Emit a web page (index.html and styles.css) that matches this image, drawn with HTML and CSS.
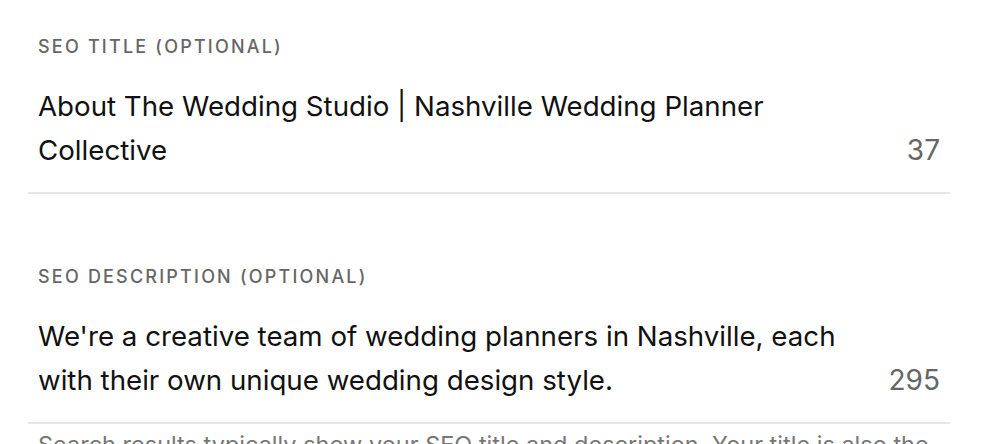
FILE: index.html
```html
<!DOCTYPE html>
<html>
<head>
<meta charset="utf-8">
<link rel="stylesheet" href="styles.css">
</head>
<body>
<div class="panel">
  <div class="field">
    <div class="label">SEO Title (Optional)</div>
    <div class="input-row">
      <div class="value">About The Wedding Studio | Nashville Wedding Planner Collective</div>
      <div class="count">37</div>
    </div>
  </div>
  <div class="field">
    <div class="label">SEO Description (Optional)</div>
    <div class="input-row">
      <div class="value">We're a creative team of wedding planners in Nashville, each with their own unique wedding design style.</div>
      <div class="count">295</div>
    </div>
    <p class="help">Search results typically show your SEO title and description. Your title is also the text shown in browser tabs.</p>
  </div>
</div>
</body>
</html>
```
FILE: styles.css
```css
html, body {
  margin: 0;
  padding: 0;
  background: #fff;
  overflow: hidden;
}
body {
  font-family: Inter, "Liberation Sans", sans-serif;
  color: #111;
}
.panel {
  width: 922px;
  margin-left: 28px;
  padding-top: 36px;
}
.field + .field {
  margin-top: 72px;
}
.label {
  padding: 0 10px;
  font-size: 18px;
  line-height: 21px;
  font-weight: 500;
  letter-spacing: 2.2px;
  text-transform: uppercase;
  color: #666;
}
.input-row {
  display: flex;
  align-items: flex-end;
  justify-content: space-between;
  margin-top: 27px;
  padding: 0 10px 20px;
  border-bottom: 2px solid #e6e6e6;
}
.value {
  max-width: 820px;
  font-size: 27.7px;
  line-height: 44px;
  color: #111;
}
.count {
  font-size: 28px;
  line-height: 44px;
  color: #666;
}
.help {
  margin: 6px 0 0;
  padding: 0 10px;
  font-size: 23.5px;
  line-height: 30px;
  color: #777;
}
```
